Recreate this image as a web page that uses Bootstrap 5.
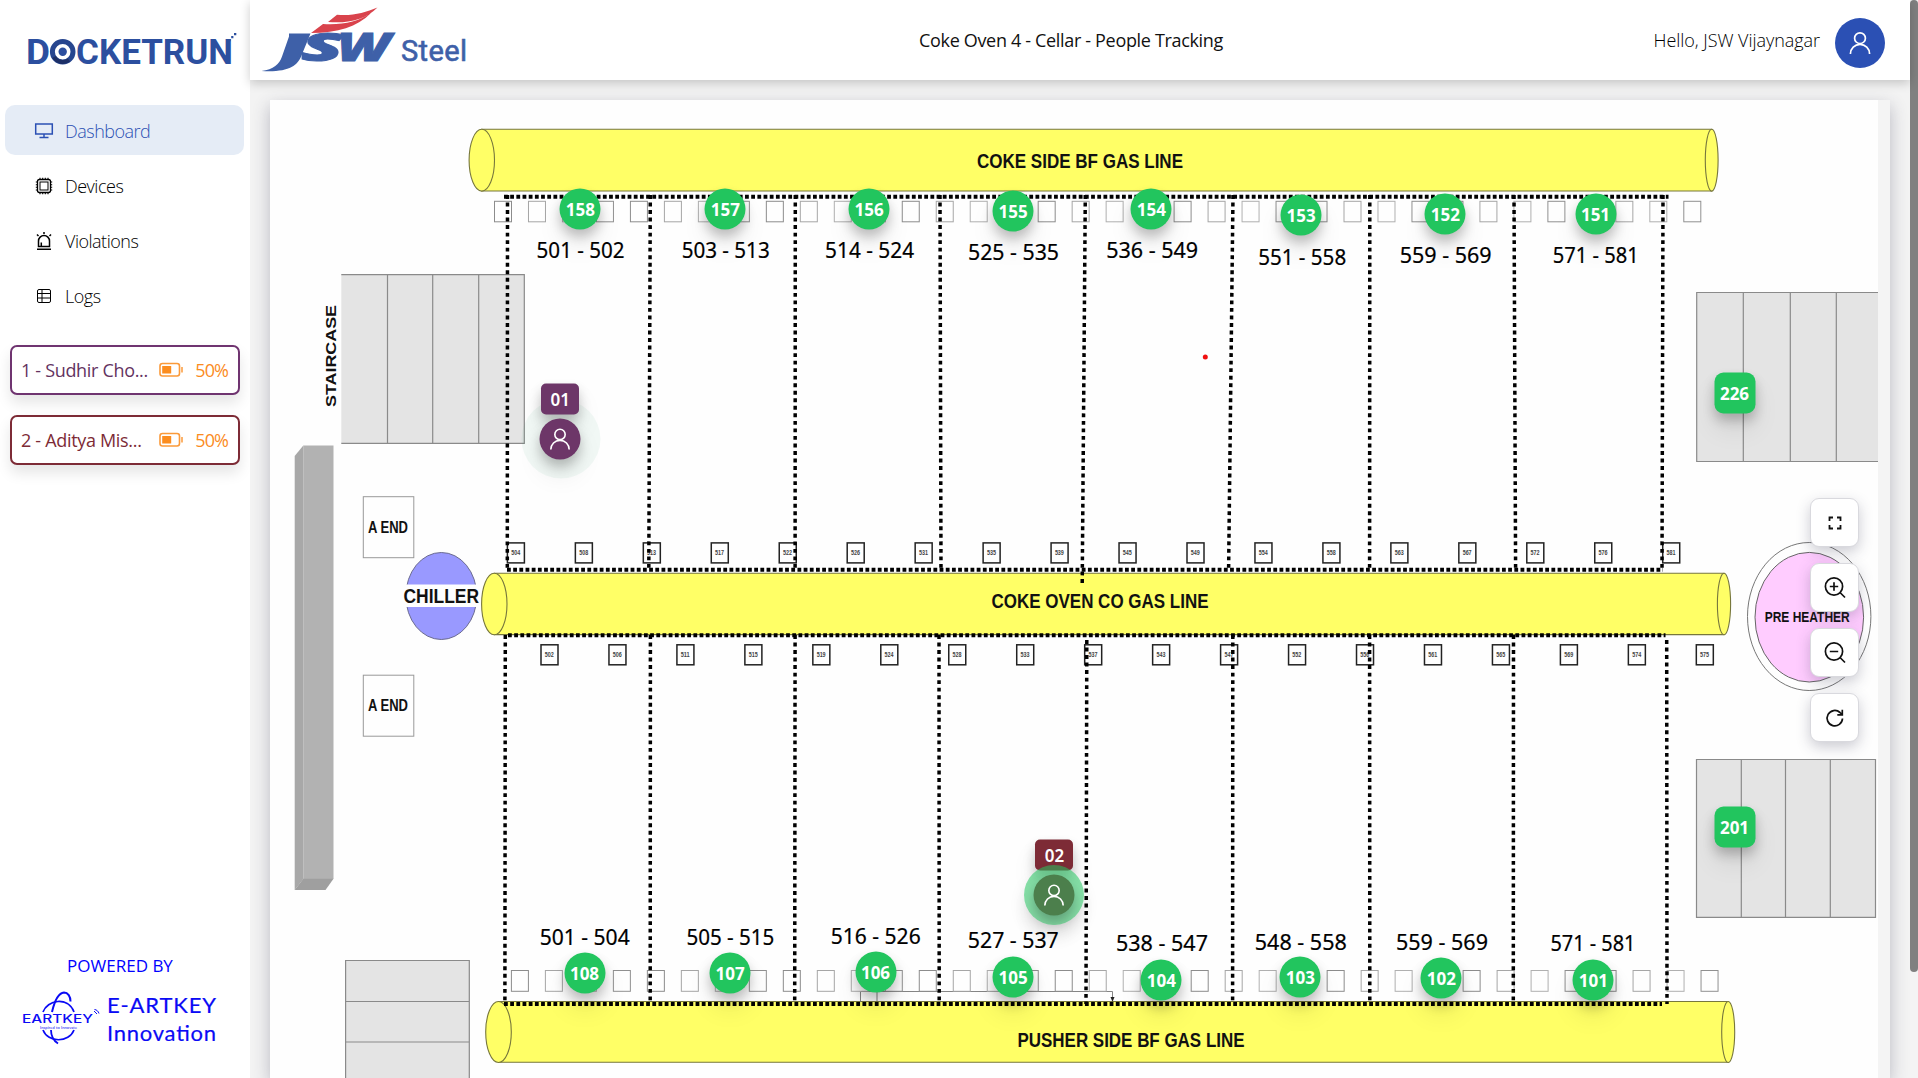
<!DOCTYPE html>
<html lang="en">
<head>
<meta charset="utf-8">
<meta name="viewport" content="width=device-width, initial-scale=1">
<title>Coke Oven 4 - Cellar - People Tracking</title>
<link href="https://cdn.jsdelivr.net/npm/bootstrap@5.3.0/dist/css/bootstrap.min.css" rel="stylesheet">
<style>
body{font-family:"Open Sans","Noto Sans",sans-serif;font-size:18px;color:#111;background:#fff;overflow:hidden}
.side{width:250px}
.main-area{background:#f3f3f3;min-width:0}
.brand-box{height:105px}
.side-menu{gap:5px;padding:0 6px 0 5px}
.side-menu .nav-link{height:50px;border-radius:10px;padding:1px 0 0 29px;gap:11px;color:#000;font-weight:300;letter-spacing:-.5px;line-height:1}
.side-menu .nav-link.active{background:#e5ecf6;color:#2b50b4}
.side-menu svg{width:20px;height:20px;flex:none}
.people{padding:25px 10px 10px;gap:20px}
.person{height:50px;border:2px solid;border-radius:7px;padding:0 10px 0 9px;background:#fff;font-weight:400;letter-spacing:-.32px;line-height:1;box-shadow:0 8px 14px rgba(0,0,0,.1)}
.person .who{width:131px}
.person .level{color:#fb8c1e;font-weight:400;letter-spacing:-.9px}
.tone-1{border-color:#6f3470;color:#63335f}
.tone-2{border-color:#7d2b36;color:#7d2b36}
.powered{color:#00f;padding-bottom:31px}
.powered span{font-size:17px;letter-spacing:0;line-height:20px;padding-right:10px}
.topbar{height:80px;background:#fff;box-shadow:0 3px 10px rgba(0,0,0,.2);padding:0 25px 0 10px;z-index:2}
.topbar .head-title{letter-spacing:-.33px;line-height:1;padding-right:18px}
.greet{font-weight:300;color:#000;letter-spacing:-.05px;gap:15px;line-height:1}
.avatar{width:50px;height:50px;background:#2b50b4;margin-top:6px}
.stage-pad{padding:20px 20px 0;min-height:0}
.stage{background:#f4f4f4;box-shadow:0 6px 16px rgba(50,50,80,.3)}
.plan{width:1608px;height:978px;background:#fefefe;overflow:hidden}
.plan>svg{display:block}
.pin{position:absolute;transform:translate(-50%,-50%);width:41px;height:41px;display:flex;align-items:center;justify-content:center;color:#fff;font:700 17px "Noto Sans","Open Sans",sans-serif;background:#22c55e;border-radius:50%;box-shadow:0 7px 12px rgba(0,0,0,.22),0 16px 26px rgba(0,0,0,.08)}
.pin.gate{border-radius:9px}
.pin.tag{width:38px;height:31px;border-radius:5px;font-weight:600;font-size:17px}
.pin.worker-1{background:#6d3668}
.pin.worker-2{background:#7d2b36}
.pin.worker-on{background:#4c7f4c}
.halo{position:absolute;transform:translate(-50%,-50%);border-radius:50%}
.halo.soft{width:79px;height:79px;background:rgba(34,160,94,.06)}
.halo.strong{width:60px;height:60px;background:rgba(34,197,94,.55);box-shadow:0 10px 16px rgba(0,0,0,.1)}
.map-tools{position:absolute;left:1540px;top:398px;gap:16px;z-index:3}
.map-tools .btn{width:49px;height:49px;border:1px solid #d9d9de;border-radius:9px;background:#fff;box-shadow:0 5px 14px rgba(50,50,80,.25)}
.scroll-rail{width:8px;background:#f4f4f4}
.scroll-rail div{height:972px;background:#808080;border-radius:4px}
.ln{fill:none;stroke:currentColor;stroke-width:1.5}
.cap{font-family:"Liberation Sans",Arial,sans-serif;font-weight:700;fill:#111}
.range{font-family:"Noto Sans",sans-serif;font-size:21px;fill:#000;stroke:#000;stroke-width:.2px;text-anchor:middle}
</style>
<script src="https://cdn.jsdelivr.net/npm/bootstrap@5.3.0/dist/js/bootstrap.bundle.min.js"></script>
</head>
<body>
<svg width="0" height="0" class="position-absolute"><defs>
<symbol id="person" viewBox="0 0 24 24"><g fill="none" stroke="#fff" stroke-width="1.7"><circle cx="12" cy="7.2" r="5.4"/><path d="M2.4 23a9.6 9.6 0 0 1 19.2 0"/></g></symbol>
</defs></svg>
<div class="d-flex vh-100">
  <aside class="side d-flex flex-column flex-shrink-0">
    <div class="brand-box">
      <svg width="250" height="100" font-family="Roboto,sans-serif" font-weight="700" font-size="35" fill="#2c4f9f">
        <text x="26" y="64.3" textLength="24" lengthAdjust="spacingAndGlyphs">D</text>
        <circle cx="62.7" cy="51.8" r="10.3" fill="none" stroke="#27468f" stroke-width="5"/>
        <path d="M54 57a10.3 10.3 0 0 0 15 3" fill="none" stroke="#1c2f66" stroke-width="4"/>
        <circle cx="62.7" cy="51.8" r="4.2"/>
        <text x="76" y="64.3" textLength="157" lengthAdjust="spacingAndGlyphs">CKETRUN</text>
        <path d="M228.500 39h2.200v2.200h-2.200zM231.200 36h2.200v2.200h-2.200zM234 33h2.300v2.300h-2.300z" />
      </svg>
    </div>
    <nav class="side-menu nav flex-column">
      <a class="nav-link active d-flex align-items-center" href="#"><svg class="ln" viewBox="0 0 20 20"><path d="M1.700 3h16.600v10H1.700zM10 13v3.500M5.500 16.500h9"/></svg>Dashboard</a>
      <a class="nav-link d-flex align-items-center" href="#"><svg class="ln" viewBox="0 0 20 20"><rect x="3.500" y="3.500" width="13" height="13" rx="2" stroke-width="1.300"/><rect x="6" y="6" width="8" height="8" stroke-width="1"/><path stroke-width="1.100" d="M6 1.800v2M8.700 1.800v2M11.300 1.800v2M14 1.800v2M6 16.200v2M8.700 16.200v2M11.300 16.200v2M14 16.200v2M1.800 6h2M1.800 8.700h2M1.800 11.300h2M1.800 14h2M16.200 6h2M16.200 8.700h2M16.200 11.300h2M16.200 14h2"/></svg>Devices</a>
      <a class="nav-link d-flex align-items-center" href="#"><svg class="ln" viewBox="0 0 20 20"><path d="M4.500 15.500V10a5.500 5.500 0 0 1 11 0v5.500zM3 18.200h14M7.300 15v-3.500M10 1v2M3 3.500l1.500 1.500M17 3.500l-1.500 1.500"/></svg>Violations</a>
      <a class="nav-link d-flex align-items-center" href="#"><svg class="ln" viewBox="0 0 20 20"><g stroke-width="1"><rect x="3.500" y="3.500" width="13" height="13" rx="1.500"/><path d="M3.500 7.500h13M3.500 12h13M8 3.500v13"/></g></svg>Logs</a>
    </nav>
    <div class="people d-flex flex-column">
      <div class="person tone-1 d-flex align-items-center"><span class="who text-nowrap">1 - Sudhir Cho...</span>
        <svg width="24" height="16" class="ms-2 me-2 flex-shrink-0"><rect x="1" y="1.500" width="19.500" height="12.500" rx="2.500" fill="none" stroke="#fb9a3a" stroke-width="1.600"/><rect x="3.200" y="4" width="9" height="7.500" fill="#fb8c1e"/><path d="M23 5v5.500" stroke="#fb9a3a" stroke-width="1.500"/></svg><span class="level ms-1">50%</span></div>
      <div class="person tone-2 d-flex align-items-center"><span class="who text-nowrap">2 - Aditya Mis...</span>
        <svg width="24" height="16" class="ms-2 me-2 flex-shrink-0"><rect x="1" y="1.500" width="19.500" height="12.500" rx="2.500" fill="none" stroke="#fb9a3a" stroke-width="1.600"/><rect x="3.200" y="4" width="9" height="7.500" fill="#fb8c1e"/><path d="M23 5v5.500" stroke="#fb9a3a" stroke-width="1.500"/></svg><span class="level ms-1">50%</span></div>
    </div>
    <div class="powered mt-auto d-flex flex-column align-items-center">
      <span>POWERED BY</span>
      <svg width="250" height="63" viewBox="0 984 250 63" class="mt-2">
        <g fill="none" stroke="#0a0af5">
          <path stroke-width="1.700" d="M43 1012c4-12 25-16 31 0M43 1030c5 13 26 13 31 0"/>
          <path stroke-width="2" d="M52 1012c3-13 7-19 12-19.500 4 0 6.500 4 6.500 9"/>
          <path stroke-width="1.800" d="M51 1030c0 6 3 11 7 13.500"/>
          <path stroke-width="1" d="M94 1011l3 3M94.500 1009.500c2 0 4 2 4.500 4"/>
        </g>
        <g fill="#0a0af5" font-family="Lato,sans-serif">
          <text x="22" y="1023" font-family="Inter,sans-serif" font-size="11.500" font-weight="500" textLength="71" lengthAdjust="spacingAndGlyphs">EARTKEY</text>
          <text x="40" y="1028.500" font-size="4" textLength="37">Inspired to Innovate</text>
          <text x="107" y="1013.300" font-size="22" font-weight="400" stroke="#0a0af5" stroke-width=".2" textLength="109">E-ARTKEY</text>
          <text x="107" y="1041" font-size="22" font-weight="400" stroke="#0a0af5" stroke-width=".2" textLength="109">Innovation</text>
        </g>
      </svg>
    </div>
  </aside>

  <main class="main-area flex-grow-1 d-flex flex-column">
    <header class="topbar d-flex align-items-center justify-content-between position-relative">
      <svg width="215" height="80" viewBox="260 0 215 80">
        <g fill="#3e60a8">
          <g font-family="'Open Sans',sans-serif" font-weight="800" font-style="italic">
            <text x="301" y="61" font-size="38" textLength="42" lengthAdjust="spacingAndGlyphs" stroke="#3e60a8" stroke-width="1">S</text>
            <text x="337" y="61" font-size="38.500" textLength="53" lengthAdjust="spacingAndGlyphs" stroke="#3e60a8" stroke-width=".8">W</text>
          </g>
          <path d="M289 33.500h21.500l-9 22c-4 11-14 17-40 15.500 12-1.500 18-7 20.500-14.500l7-20z"/>
          <text x="401" y="61" font-family="Roboto,sans-serif" font-size="29" font-weight="400" stroke="#3e60a8" stroke-width=".6" textLength="66" lengthAdjust="spacing">Steel</text>
        </g>
        <path fill="#d9434c" d="M337 14.700c15 1.500 28-2 40.500-7.200-13 13-30 16-49.500 14.500zM323 24c20 1 35-2 48-11-14 14-33 20-60 20z"/>
      </svg>
      <span class="head-title position-absolute top-50 start-50 translate-middle text-nowrap">Coke Oven 4 - Cellar - People Tracking</span>
      <div class="greet d-flex align-items-center"><span>Hello, JSW Vijaynagar</span>
        <span class="avatar rounded-circle d-flex align-items-center justify-content-center"><svg width="24" height="24"><use href="#person"/></svg></span></div>
    </header>
    <section class="stage-pad flex-grow-1 d-flex">
      <div class="stage flex-grow-1">
        <div class="plan position-relative" id="plan">
          <svg width="1608" height="978" viewBox="270 100 1608 978">
            <g fill="#e4e4e4" stroke="#8a8a8a" stroke-width="1.200">
              <path d="M341.300 274.600h183v168.700h-183M387.500 274.600v168.700M432.700 274.600v168.700M478.700 274.600v168.700"/>
              <path d="M1880 292.500h-183.300v169H1880M1743.300 292.500v169M1790.300 292.500v169M1836.300 292.500v169"/>
              <path d="M1696.500 759.500h179v157.800h-179zM1741.300 759.500v158M1785.500 759.500v158M1830.300 759.500v158"/>
              <path d="M345.600 1090V960.500h123.700V1090M345.600 1001.500h123.700M345.600 1042h123.700"/>
            </g>
            <path fill="#b2b2b2" d="M303.300 445.500h30.200v433.500h-30.200z"/>
            <path fill="#a8a8a8" d="M294.700 456l8.600-10.500V879l-8.600 11z"/>
            <path fill="#9f9f9f" d="M303.300 878.700h30.200l-8 11.300h-30.800z"/>
            <g fill="#fefefe" stroke="#999"><rect x="363.300" y="496.700" width="50.500" height="61"/><rect x="363.300" y="675.200" width="50.500" height="61"/></g>
            <ellipse cx="441.300" cy="596" rx="35.500" ry="43.500" fill="#99f" stroke="#6b6b90"/>
            <path fill="#fefefe" d="M403 584.500h76V607h-76z"/>
            <ellipse cx="1809.200" cy="616.500" rx="61.700" ry="74" fill="#fefefe" stroke="#777"/>
            <ellipse cx="1809.300" cy="617.200" rx="54.300" ry="64.800" fill="#fcf" stroke="#666"/>
            <g fill="#ff6" stroke="#77773c" stroke-width="1.100">
              <path d="M481.800 129.300H1711.700V191H481.800z"/><ellipse cx="481.800" cy="160.200" rx="12.700" ry="30.900"/><ellipse cx="1711.700" cy="160.200" rx="6.400" ry="30.900"/>
              <path d="M494.300 573.200H1724V634.600H494.300z"/><ellipse cx="494.300" cy="604" rx="12.700" ry="30.800"/><ellipse cx="1724" cy="604" rx="6.600" ry="30.800"/>
              <path d="M498.500 1001.500H1728.200V1062.300H498.500z"/><ellipse cx="498.500" cy="1032" rx="12.800" ry="30.500"/><ellipse cx="1728.200" cy="1032" rx="6.500" ry="30.500"/>
            </g>
            <path fill="none" stroke="#777" d="M860.500 1002v-10.500h252V1000M877 992v9" stroke-width=".9"/><path fill="#222" d="M1110.500 997h4l-2 5z"/>
            <g id="hatches" fill="none"></g>
            <g id="dots" stroke="#000" fill="none"></g>
            <g class="cap" font-size="20.300">
              <text x="977" y="167.600" textLength="206" lengthAdjust="spacingAndGlyphs">COKE SIDE BF GAS LINE</text>
              <text x="991.500" y="608.300" textLength="217" lengthAdjust="spacingAndGlyphs">COKE OVEN CO GAS LINE</text>
              <text x="1017.500" y="1046.700" textLength="227" lengthAdjust="spacingAndGlyphs">PUSHER SIDE BF GAS LINE</text>
              <text x="403.500" y="602.700" textLength="75.500" lengthAdjust="spacingAndGlyphs">CHILLER</text>
              <text x="368" y="532.900" font-size="16" textLength="40" lengthAdjust="spacingAndGlyphs">A END</text>
              <text x="368" y="711.200" font-size="16" textLength="40" lengthAdjust="spacingAndGlyphs">A END</text>
              <text x="1764.700" y="622.400" font-size="14.500" textLength="85" lengthAdjust="spacingAndGlyphs">PRE HEATHER</text>
              <text transform="translate(336.300 407) rotate(-90)" font-size="15" textLength="102" lengthAdjust="spacingAndGlyphs">STAIRCASE</text>
            </g>
            <circle cx="1205.300" cy="357" r="2.500" fill="#f01010"/>
            <g id="ranges"></g>
          </svg>
          <div class="map-tools d-flex flex-column">
            <button class="btn p-0 d-flex align-items-center justify-content-center"><svg width="16" height="16" fill="none" stroke="#111" stroke-width="1.800"><path d="M2.500 6V2.500H6M10 2.500h3.500V6M13.500 10v3.500H10M6 13.500H2.500V10"/></svg></button>
            <button class="btn p-0 d-flex align-items-center justify-content-center"><svg width="22" height="22" fill="none" stroke="#111" stroke-width="1.700"><circle cx="10" cy="9.500" r="8.600"/><path d="M16 15.500l5 5M10 5.300v8.400M5.800 9.500h8.400"/></svg></button>
            <button class="btn p-0 d-flex align-items-center justify-content-center"><svg width="22" height="22" fill="none" stroke="#111" stroke-width="1.700"><circle cx="10" cy="9.500" r="8.600"/><path d="M16 15.500l5 5M5.800 9.500h8.400"/></svg></button>
            <button class="btn p-0 d-flex align-items-center justify-content-center"><svg width="20" height="20" fill="none" stroke="#111" stroke-width="1.700"><path d="M17.500 10.500A7.700 7.700 0 1 1 15 4.500l2 2M17.300 1.800v5h-5"/></svg></button>
          </div>
        </div>
      </div>
    </section>
  </main>
  <div class="scroll-rail flex-shrink-0"><div></div></div>
</div>
<script>
const byId = id => document.getElementById(id);
const plan = byId('plan');

// Dotted bay boundaries: [x1, y1, x2, y2]
const across = [[504,196.7,1668.500,196.7],[507,569.8,1663,569.8],[508,635.3,1665.500,635.3],[504,1004,1662,1004]];
const upTop = [507.5,650.3,795.3,940,1085.3,1233,1369.8,1514,1663];
const upEnd = [507.3,648.8,795.1,941,1082.2,1228.6,1369.6,1515.6,1662];
const loTop = [505.3,650.4,795.1,939,1086.8,1232.8,1369.6,1513.5,1666.7];
const loEnd = [504.9,650.2,794.7,939.2,1086,1232.6,1369.8,1513.3,1667];
let dots = across.map(l => `<path stroke-width="4" stroke-dasharray="3.800 2.380" d="M${l[0]} ${l[1]}L${l[2]} ${l[3]}"/>`).join('');
upTop.forEach((x, i) => dots += `<path stroke-width="3.500" stroke-dasharray="3.900 3.630" d="M${x} 195L${upEnd[i]} ${i === 4 ? 585 : 570}"/>`);
loTop.forEach((x, i) => dots += `<path stroke-width="3.500" stroke-dasharray="3.900 3.630" d="M${x} ${i > 7 || i === 4 ? 640 : 635}L${loEnd[i]} 1004"/>`);
byId('dots').innerHTML = dots;

// Hatch rows and numbered oven openings
let h = '';
for (let i = 0; i < 36; i++) {
  const tone = ['#8c8c8c', '#a6a6a6', '#b0b0b0', '#909090'][i % 4];
  h += `<rect x="${494.5 + i * 33.98}" y="201.3" width="17" height="20.500" stroke="${tone}"/>`;
  h += `<rect x="${511.4 + i * 33.99}" y="970.5" width="17" height="20.800" stroke="${tone}"/>`;
}
const openings = [
  [516, 542.9, '504 508 513 517 522 526 531 535 539 545 549 554 558 563 567 572 576 581'],
  [549.6, 644.8, '502 506 511 515 519 524 528 533 537 543 547 552 556 561 565 569 574 575']];
openings.forEach(([x0, y, list]) => list.split(' ').forEach((n, i) => {
  const x = x0 + i * 67.96;
  h += `<rect x="${x - 8.6}" y="${y}" width="17" height="20" stroke="#222" stroke-width="1.500"/>`;
  h += `<text x="${x - .3}" y="${y + 12}" font-family="Liberation Sans,sans-serif" font-size="7" font-weight="700" textLength="9" lengthAdjust="spacingAndGlyphs" text-anchor="middle" fill="#444">${n}</text>`;
}));
byId('hatches').innerHTML = h;

// Anchors: name, x, y, oven range, range x, range middle, range width
const anchors = [
  ['158',580.3,208.9,'501 - 502',580.6,250.3,88],['157',725.3,208.9,'503 - 513',725.7,250.3,88],
  ['156',869.2,208.9,'514 - 524',869.6,250.3,89],['155',1013.1,210.9,'525 - 535',1013.5,252,91],
  ['154',1151.4,208.9,'536 - 549',1152.2,250.3,92],['153',1301.2,214.5,'551 - 558',1302.2,257,88],
  ['152',1445.3,213.9,'559 - 569',1445.7,255.3,92],['151',1595.5,213.9,'571 - 581',1595.7,255.3,86],
  ['108',584.5,973.3,'501 - 504',584.7,937,90],['107',730.2,973.3,'505 - 515',730.4,937,88],
  ['106',875.5,971.9,'516 - 526',875.7,936,90],['105',1013.1,976.6,'527 - 537',1013.3,940,91],
  ['104',1161.4,979.6,'538 - 547',1162,942.7,92],['103',1300.3,977.3,'548 - 558',1300.8,942,92],
  ['102',1441.3,977.5,'559 - 569',1442,942,92],['101',1593.3,979.6,'571 - 581',1593,943,85]];
byId('ranges').innerHTML = anchors.map(a => `<text class="range" x="${a[4]}" y="${a[5] + 7.9}" textLength="${a[6]}" lengthAdjust="spacingAndGlyphs">${a[3]}</text>`).join('');

function place(cls, x, y, html) {
  plan.insertAdjacentHTML('beforeend', `<div class="${cls}" style="left:${x - 270}px;top:${y - 100}px">${html}</div>`);
}
const face = '<svg width="23" height="23"><use href="#person"/></svg>';
anchors.forEach(a => place('pin', a[1], a[2], a[0]));
place('pin gate', 1734.5, 392.6, '226');
place('pin gate', 1734.5, 826.5, '201');
place('halo soft', 560.5, 438.5, '');
place('pin tag worker-1', 560.3, 398.5, '01');
place('pin worker-1', 560.3, 438.5, face);
place('pin tag worker-2', 1054.4, 854.5, '02');
place('halo strong', 1054.4, 894.5, '');
place('pin worker-on', 1054.4, 894.5, face);
</script>
</body>
</html>
